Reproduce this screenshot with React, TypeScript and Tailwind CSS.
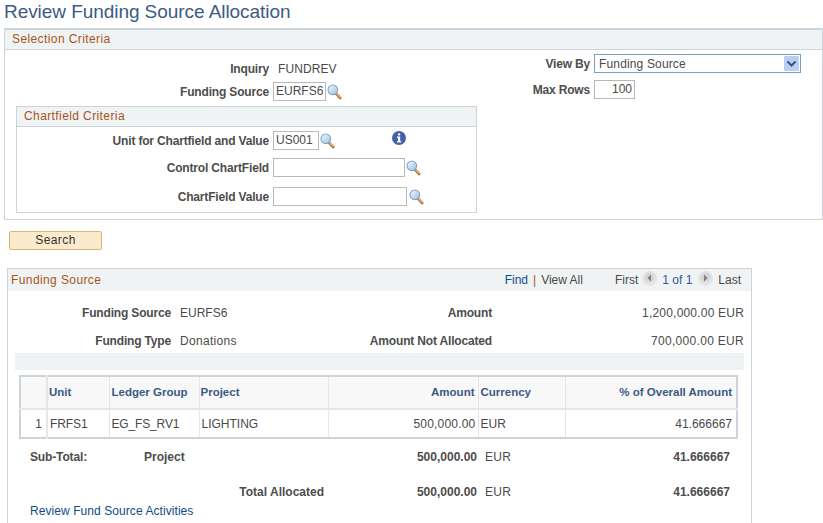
import React from "react";

const Lookup = () => (
  <svg width="15" height="16" viewBox="0 0 15 16" className="shrink-0">
    <defs>
      <linearGradient id="lens" x1="0" y1="0" x2="1" y2="1">
        <stop offset="0" stopColor="#f2f8fd" />
        <stop offset="1" stopColor="#9dc0e4" />
      </linearGradient>
    </defs>
    <path d="M9 9.5 L13.2 14" stroke="#a8703a" strokeWidth="2.6" strokeLinecap="round" />
    <path d="M9.5 9.5 L13.2 13.4" stroke="#f3bb78" strokeWidth="1.1" strokeLinecap="round" />
    <circle cx="5.8" cy="5.8" r="4.8" fill="url(#lens)" stroke="#7ca2cb" strokeWidth="1.1" />
  </svg>
);

const InfoIcon = () => (
  <svg width="14" height="14" viewBox="0 0 14 14" className="shrink-0">
    <circle cx="7" cy="7" r="7" fill="#4560a8" />
    <rect x="6" y="2.4" width="2.2" height="2" fill="#fff" />
    <path d="M5 5.6 H8.2 V10.2 H9.2 V11.6 H5 V10.2 H6 V7 H5 Z" fill="#fff" />
  </svg>
);

const NavButton = ({ dir }: { dir: "prev" | "next" }) => (
  <svg width="15" height="15" viewBox="0 0 15 15" className="shrink-0 mb-[4px]">
    <circle cx="7.5" cy="7.5" r="7" fill="#e6e6e6" stroke="#e2e2e2" />
    <circle cx="7.5" cy="6.5" r="5" fill="#d6d6d6" />
    {dir === "prev" ? <path d="M9 3.5 L5.5 7 L9 10.5 Z" fill="#808080" /> : <path d="M6 3.5 L9.5 7 L6 10.5 Z" fill="#808080" />}
  </svg>
);

const Box = ({ value, className }: { value?: string; className: string }) => (
  <div className={"h-[19px] border border-[#b8b8b8] bg-white px-[2px] leading-[17px] text-[#4a4a4a] " + className}>
    {value}
  </div>
);

const FormRow = ({ label, width, children }: { label: string; width: string; children: React.ReactNode }) => (
  <div className="flex h-[19px] items-center">
    <div className={"pr-[4px] text-right font-bold tracking-[-0.17px] text-[#4d4d4d] " + width}>{label}</div>
    {children}
  </div>
);

export default function App() {
  return (
    <div className="h-[523px] w-[823px] overflow-hidden bg-white text-[12px] text-[#4a4a4a] font-['Liberation_Sans',Arial,sans-serif]">
      <h1 className="h-[28px] pl-[4px] text-[19px] leading-[23px] tracking-[-0.06px] text-[#3b5a85]">Review Funding Source Allocation</h1>

      <section className="ml-[4px] h-[192px] border-2 border-x-[1px] border-b-[1px] border-[#ccd3da]">
        <div className="h-[20px] border-b border-[#ccd3da] bg-[#f0f3f4] pl-[7px] leading-[18px] tracking-[0.4px] text-[#a8531a]">Selection Criteria</div>
        <div className="flex">
          <div className="w-[480px]">
            <div className="mt-[10px] flex h-[18px] items-center">
              <div className="w-[265px] pr-[1px] text-right font-bold tracking-[-0.17px] text-[#4d4d4d]">Inquiry</div>
              <div className="pl-[8px] tracking-[0.1px]">FUNDREV</div>
            </div>
            <div className="mt-[4px]">
              <FormRow label="Funding Source" width="w-[268px]">
                <Box value="EURFS6" className="w-[53px]" />
                <div className="ml-[1px]"><Lookup /></div>
              </FormRow>
            </div>
            <div className="ml-[11px] mt-[5px] h-[107px] w-[461px] border border-[#ccd3da]">
              <div className="h-[20px] border-b border-[#ccd3da] bg-[#f0f3f4] pl-[7px] leading-[18px] tracking-[0.4px] text-[#a8531a]">Chartfield Criteria</div>
              <div className="flex flex-col pt-[4px]">
                <FormRow label="Unit for Chartfield and Value" width="w-[256px]">
                  <Box value="US001" className="w-[46px]" />
                  <div className="ml-[1px]"><Lookup /></div>
                  <div className="mb-[6px] ml-[57px]"><InfoIcon /></div>
                </FormRow>
                <div className="mt-[8px]">
                  <FormRow label="Control ChartField" width="w-[256px]">
                    <Box className="w-[132px]" />
                    <div className="ml-[1px]"><Lookup /></div>
                  </FormRow>
                </div>
                <div className="mt-[10px]">
                  <FormRow label="ChartField Value" width="w-[256px]">
                    <Box className="w-[134px]" />
                    <div className="ml-[2px]"><Lookup /></div>
                  </FormRow>
                </div>
              </div>
            </div>
          </div>
          <div className="pt-[4px]">
            <div className="flex h-[19px] items-center">
              <div className="w-[109px] pr-[4px] text-right font-bold tracking-[-0.17px] text-[#4d4d4d]">View By</div>
              <div className="flex h-[19px] w-[207px] items-center justify-between border border-[#7a9fc0] bg-white pl-[4px] pr-[1px] tracking-[0.15px]">
                <span>Funding Source</span>
                <svg width="15" height="15" viewBox="0 0 15 15">
                  <rect width="15" height="15" rx="1" fill="#b9cff0" />
                  <path d="M3.5 5.5 L7.5 9.5 L11.5 5.5" fill="none" stroke="#33557f" strokeWidth="2" />
                </svg>
              </div>
            </div>
            <div className="mt-[7px] flex h-[19px] items-center">
              <div className="w-[109px] pr-[4px] text-right font-bold tracking-[-0.17px] text-[#4d4d4d]">Max Rows</div>
              <Box value="100" className="w-[41px] text-right" />
            </div>
          </div>
        </div>
      </section>

      <button className="ml-[9px] mt-[11px] block h-[19px] w-[93px] rounded-[2px] border border-[#dcb675] bg-[#fbeacb] text-center leading-[17px] tracking-[0.4px] text-[#333]">Search</button>

      <section className="ml-[7px] mt-[18px] h-[260px] w-[745px] border-x border-t border-[#ccd3da]">
        <div className="flex h-[22px] items-center justify-between bg-[#f0f3f4] pl-[3px] pr-[10px]">
          <span className="tracking-[0.4px] text-[#a8531a]">Funding Source</span>
          <div className="flex items-center">
            <span className="text-[#0f4c8a]">Find</span>
            <span className="mx-[5px] text-[#a8531a]">|</span>
            <span>View All</span>
            <span className="ml-[32px]">First</span>
            <span className="mx-[4px]"><NavButton dir="prev" /></span>
            <span className="ml-[1px] text-[#2f5a8e]">1 of 1</span>
            <span className="ml-[6px] mr-[5px]"><NavButton dir="next" /></span>
            <span>Last</span>
          </div>
        </div>

        <div className="mt-[13px] flex h-[18px] items-center">
          <div className="w-[163px] text-right font-bold tracking-[-0.17px] text-[#4d4d4d]">Funding Source</div>
          <div className="w-[200px] pl-[9px]">EURFS6</div>
          <div className="w-[121px] text-right font-bold tracking-[-0.17px] text-[#4d4d4d]">Amount</div>
          <div className="w-[252px] text-right tracking-[0.2px]">1,200,000.00 EUR</div>
        </div>
        <div className="mt-[10px] flex h-[18px] items-center">
          <div className="w-[163px] text-right font-bold tracking-[-0.17px] text-[#4d4d4d]">Funding Type</div>
          <div className="w-[200px] pl-[9px] tracking-[0.3px]">Donations</div>
          <div className="w-[121px] whitespace-nowrap text-right font-bold tracking-[-0.17px] text-[#4d4d4d] [direction:rtl]">Amount Not Allocated</div>
          <div className="w-[252px] text-right tracking-[0.3px]">700,000.00 EUR</div>
        </div>
        <div className="ml-[7px] mt-[3px] h-[17px] w-[729px] bg-[#f0f3f4]"></div>

        <table className="ml-[11px] mt-[5px] w-[719px] table-fixed border-collapse border-2 border-[#ccd3da]">
          <thead>
            <tr className="h-[33px] bg-[#f8f8f8] text-[11.5px] font-bold text-[#3b5a85]">
              <th className="w-[27px] border-b-[2px] border-r-[2px] border-[#e4e6e8]"></th>
              <th className="w-[62px] border-b-[2px] border-r border-[#e4e6e8] pl-[1px] text-left font-bold">Unit</th>
              <th className="w-[90px] border-b-[2px] border-r border-[#e4e6e8] pl-[2px] text-left font-bold">Ledger Group</th>
              <th className="w-[129px] border-b-[2px] border-r border-[#e4e6e8] pl-[1px] text-left font-bold">Project</th>
              <th className="w-[150px] border-b-[2px] border-r border-[#e4e6e8] pr-[3px] text-right font-bold">Amount</th>
              <th className="w-[87px] border-b-[2px] border-r border-[#e4e6e8] pl-[2px] text-left font-bold">Currency</th>
              <th className="border-b-[2px] border-[#e4e6e8] pr-[4px] text-right font-bold">% of Overall Amount</th>
            </tr>
          </thead>
          <tbody>
            <tr className="h-[29px]">
              <td className="border-r-[2px] border-[#e4e6e8] pr-[4px] text-right">1</td>
              <td className="border-r border-[#e4e6e8] pl-[2px] tracking-[-0.1px]">FRFS1</td>
              <td className="border-r border-[#e4e6e8] pl-[2px] tracking-[-0.15px]">EG_FS_RV1</td>
              <td className="border-r border-[#e4e6e8] pl-[2px]">LIGHTING</td>
              <td className="border-r border-[#e4e6e8] pr-[2px] text-right tracking-[0.2px]">500,000.00</td>
              <td className="border-r border-[#e4e6e8] pl-[2px]">EUR</td>
              <td className="pr-[4px] text-right">41.666667</td>
            </tr>
          </tbody>
        </table>

        <div className="mt-[9px] flex h-[18px] items-center font-bold text-[#4d4d4d]">
          <div className="w-[136px] pl-[22px] tracking-[-0.14px]">Sub-Total:</div>
          <div className="w-[200px]">Project</div>
          <div className="w-[133px] text-right">500,000.00</div>
          <div className="w-[100px] pl-[8px] font-normal tracking-[0.3px] text-[#4a4a4a]">EUR</div>
          <div className="w-[153px] text-right">41.666667</div>
        </div>
        <div className="mt-[17px] flex h-[18px] items-center font-bold text-[#4d4d4d]">
          <div className="w-[336px] pr-[20px] text-right">Total Allocated</div>
          <div className="w-[133px] text-right">500,000.00</div>
          <div className="w-[100px] pl-[8px] font-normal tracking-[0.3px] text-[#4a4a4a]">EUR</div>
          <div className="w-[153px] text-right">41.666667</div>
        </div>
        <div className="ml-[22px] mt-[1px] tracking-[0.07px] text-[#0f4c8a]">Review Fund Source Activities</div>
      </section>
    </div>
  );
}
